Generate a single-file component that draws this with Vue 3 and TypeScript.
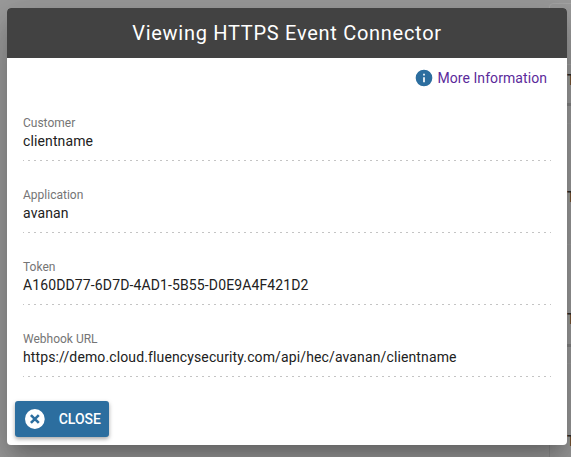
<script setup lang="ts">
const fields = [
  { label: 'Customer', value: 'clientname' },
  { label: 'Application', value: 'avanan' },
  { label: 'Token', value: 'A160DD77-6D7D-4AD1-5B55-D0E9A4F421D2' },
  { label: 'Webhook URL', value: 'https://demo.cloud.fluencysecurity.com/api/hec/avanan/clientname' },
]
const peeks = [72, 189, 311, 433]
const bands = [103, 344]
const lines = [123, 244, 363]
</script>

<template>
  <div class="page">
    <div class="behind">
      <div class="card-edge"></div>
      <div class="bottom-edge"></div>
      <span v-for="t in peeks" :key="t" class="peek" :style="{ top: t + 'px' }">T</span>
      <i v-for="b in bands" :key="b" class="band" :style="{ top: b + 'px' }"></i>
      <i v-for="l in lines" :key="l" class="line" :style="{ top: l + 'px' }"></i>
    </div>
    <div class="dialog">
      <header class="head">Viewing HTTPS Event Connector</header>
      <main class="body">
        <div class="info">
          <svg class="info-icon" viewBox="0 0 24 24" aria-hidden="true">
            <path fill="#2c6e9f" d="M12 2a10 10 0 1 0 0 20 10 10 0 0 0 0-20zm1 15h-2v-6h2v6zm0-8h-2V7h2v2z" />
          </svg>
          <a class="info-link">More Information</a>
        </div>
        <div v-for="f in fields" :key="f.label" class="field">
          <div class="label">{{ f.label }}</div>
          <div class="value">{{ f.value }}</div>
        </div>
      </main>
      <footer class="foot">
        <button class="close" type="button">
          <svg class="close-icon" viewBox="0 0 24 24" aria-hidden="true">
            <circle cx="12" cy="12" r="10" fill="#fff" />
            <path d="M8 8l8 8M16 8l-8 8" fill="none" stroke="#2c6e9f" stroke-width="2.600" />
          </svg>
          <span>CLOSE</span>
        </button>
      </footer>
    </div>
  </div>
</template>

<style>
html, body { margin: 0; background: #999; }
</style>

<style scoped>
.page {
  position: relative;
  width: 571px;
  height: 457px;
  box-sizing: border-box;
  background: #9c9c9c;
  padding: 8px 4px 0 7px;
  overflow: hidden;
  font-family: Roboto, sans-serif;
}
.behind { position: absolute; inset: 0; }
.card-edge {
  position: absolute;
  left: 549px;
  top: 3px;
  width: 40px;
  height: 60px;
  border: 1px solid #a6a6a6;
  border-radius: 4px;
}
.bottom-edge {
  position: absolute;
  left: 549px;
  top: 440px;
  width: 1px;
  height: 17px;
  background: #8e8e8e;
}
.peek {
  position: absolute;
  left: 567px;
  font-size: 14px;
  line-height: 16px;
  font-weight: 500;
  color: #2c2c2c;
}
.band { position: absolute; left: 560px; right: 0; height: 3px; background: #848484; }
.line { position: absolute; left: 560px; right: 0; height: 1px; background: #a0a0a0; }
.dialog {
  position: relative;
  width: 560px;
  height: 437px;
  background: #fff;
  border-radius: 4px;
  overflow: hidden;
  display: flex;
  flex-direction: column;
  box-shadow: 0 11px 15px -7px rgba(0, 0, 0, 0.2), 0 24px 38px 3px rgba(0, 0, 0, 0.14), 0 9px 46px 8px rgba(0, 0, 0, 0.12);
}
.head {
  height: 50px;
  flex: none;
  background: #424242;
  color: #fff;
  font-size: 20px;
  letter-spacing: 0.72px;
  line-height: 50px;
  text-align: center;
}
.body {
  flex: 1;
  padding: 0 16px;
}
.info {
  height: 31px;
  box-sizing: border-box;
  padding: 10px 4px 0 0;
  display: flex;
  align-items: flex-start;
  justify-content: flex-end;
  gap: 3px;
}
.info-icon { width: 20px; height: 20px; }
.info-link { color: #5b2a9b; font-size: 14px; line-height: 20px; letter-spacing: 0.07px; }
.field {
  height: 72px;
  box-sizing: border-box;
  padding-top: 26px;
  background-image: linear-gradient(to right, #c4c4c4 2px, transparent 2px);
  background-size: 6px 1px;
  background-repeat: repeat-x;
  background-position: -1px bottom;
}
.label { color: #757575; font-size: 12px; line-height: 16px; }
.value { color: #212121; font-size: 14px; letter-spacing: 0.125px; line-height: 20px; }
.foot { padding: 0 8px 8px; }
.close {
  height: 36px;
  width: 94px;
  border: 0;
  border-radius: 3px;
  background: #2c6e9f;
  color: #fff;
  font: 500 14px Roboto, sans-serif;
  display: flex;
  align-items: center;
  gap: 12px;
  padding: 0 8px;
  box-shadow: 0 2px 4px rgba(0, 0, 0, 0.35);
}
.close-icon { width: 24px; height: 24px; }
</style>
